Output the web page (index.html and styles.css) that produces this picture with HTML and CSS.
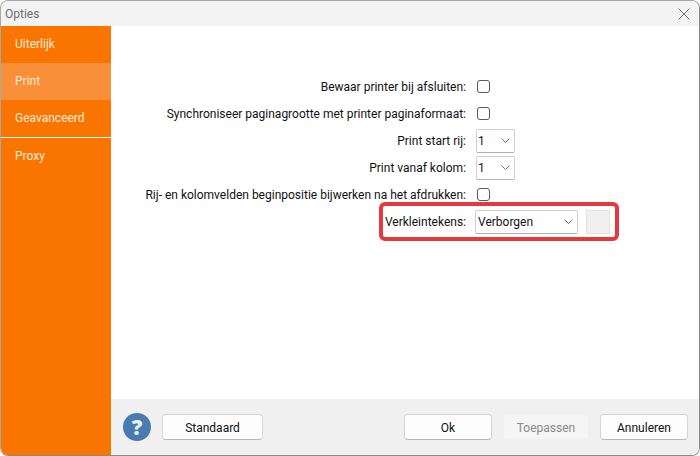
FILE: index.html
```html
<!DOCTYPE html>
<html lang="nl">
<head>
<meta charset="utf-8">
<title>Opties</title>
<link rel="stylesheet" href="styles.css">
</head>
<body>
<div class="window">
  <header class="titlebar">
    <span class="title">Opties</span>
    <svg class="close" width="12" height="12" viewBox="0 0 12 12"><path d="M0.5 0.5L11.5 11.5M11.5 0.5L0.5 11.5" stroke="#6e6e6e" stroke-width="1" fill="none"/></svg>
  </header>
  <div class="body">
    <nav class="sidebar">
      <div class="nav-item">Uiterlijk</div>
      <div class="nav-item active">Print</div>
      <div class="nav-item divided">Geavanceerd</div>
      <div class="nav-item">Proxy</div>
    </nav>
    <main class="main">
      <section class="content">
        <div class="form">
          <label class="label">Bewaar printer bij afsluiten:</label>
          <div class="control"><span class="check"></span></div>
          <label class="label">Synchroniseer paginagrootte met printer paginaformaat:</label>
          <div class="control"><span class="check"></span></div>
          <label class="label">Print start rij:</label>
          <div class="control"><div class="select small"><span>1</span><svg width="9" height="5" viewBox="0 0 9 5"><path d="M0.5 0.5L4.5 4.5L8.5 0.5" stroke="#777" fill="none"/></svg></div></div>
          <label class="label">Print vanaf kolom:</label>
          <div class="control"><div class="select small"><span>1</span><svg width="9" height="5" viewBox="0 0 9 5"><path d="M0.5 0.5L4.5 4.5L8.5 0.5" stroke="#777" fill="none"/></svg></div></div>
          <label class="label">Rij- en kolomvelden beginpositie bijwerken na het afdrukken:</label>
          <div class="control"><span class="check"></span></div>
          <label class="label">Verkleintekens:<span class="highlight"></span></label>
          <div class="control">
            <div class="select wide"><span>Verborgen</span><svg width="9" height="5" viewBox="0 0 9 5"><path d="M0.5 0.5L4.5 4.5L8.5 0.5" stroke="#666" fill="none"/></svg></div>
            <span class="swatch"></span>
          </div>
        </div>
      </section>
      <footer class="footer">
        <span class="help">?</span>
        <button class="btn standard">Standaard</button>
        <span class="spacer"></span>
        <button class="btn ok">Ok</button>
        <button class="btn apply" disabled>Toepassen</button>
        <button class="btn cancel">Annuleren</button>
      </footer>
    </main>
  </div>
</div>
</body>
</html>
```

FILE: styles.css
```css
* { box-sizing: border-box; }
html, body { margin: 0; padding: 0; height: 100%; background: #fff; }
body { font-family: Roboto, "Open Sans", sans-serif; font-size: 12px; color: #111; }
.window {
  width: 700px; height: 456px; display: flex; flex-direction: column;
  border: 1px solid #a8a8a8; border-right-color: #8a8a8a; border-bottom-color: #8a8a8a;
  border-radius: 8px; overflow: hidden; background: #fff;
}
.titlebar {
  height: 25px; flex: none; display: flex; align-items: center; justify-content: space-between;
  background: #f3f3f3; padding: 0 9px 0 4px;
}
.title { color: #6f6f6f; }
.body { flex: 1; display: flex; min-height: 0; }
.sidebar { width: 110px; flex: none; background: #f97500; }
.nav-item { height: 37px; display: flex; align-items: center; padding: 0 0 2px 14px; color: #ffecd9; }
.nav-item.active { background: #f98f38; }
.nav-item.divided { height: 38px; border-bottom: 1px solid #fff; }
.main { flex: 1; display: flex; flex-direction: column; min-width: 0; }
.content { flex: 1; padding-top: 47px; }
.form { display: grid; grid-template-columns: 355px auto; grid-auto-rows: 27px; column-gap: 11px; }
.label { display: flex; align-items: center; justify-content: flex-end; white-space: nowrap; position: relative; }
.control { display: flex; align-items: center; }
.check { width: 13px; height: 13px; border: 1px solid #5a5a5a; border-radius: 3px; background: #fdfdfd; }
.select {
  height: 24px; display: flex; align-items: center; justify-content: space-between;
  border: 1px solid #d0d0d0; border-bottom-color: #b0b0b0; border-radius: 2px; background: #fff;
  padding: 0 4px 0 2px; margin-left: -2px;
}
.select.small { width: 39px; margin-left: -1px; padding-left: 1px; }
.select.wide { width: 103px; }
.swatch { width: 24px; height: 24px; margin-left: 8px; background: #f0f0f0; border: 1px solid #e2e2e2; }
.highlight {
  position: absolute; left: 268px; top: -6px; width: 240px; height: 39px;
  border: 4px solid #e5383f; border-radius: 6px; pointer-events: none;
}
.footer {
  height: 56px; flex: none; background: #f0f0f0; display: flex; align-items: center;
  padding: 0 11px 0 12px;
}
.help {
  flex: none; width: 28px; height: 28px; border-radius: 50%; background: #4a7ab0;
  display: flex; align-items: center; justify-content: center;
  font-family: "Open Sans", sans-serif; font-weight: 800; font-size: 21px; line-height: 1; color: #e8f0f8;
}
.btn {
  height: 26px; font: inherit; color: #111; background: #fdfdfd;
  border: 1px solid #d6d6d6; border-bottom-color: #b8b8b8; border-radius: 4px; padding: 1px 0 0;
}
.standard { width: 101px; margin-left: 11px; }
.spacer { flex: 1; }
.ok { width: 88px; }
.apply { width: 86px; margin-left: 11px; background: #f5f5f5; border-color: #f0f0f0; color: #8a8a8a; }
.cancel { width: 88px; margin-left: 11px; }
```
